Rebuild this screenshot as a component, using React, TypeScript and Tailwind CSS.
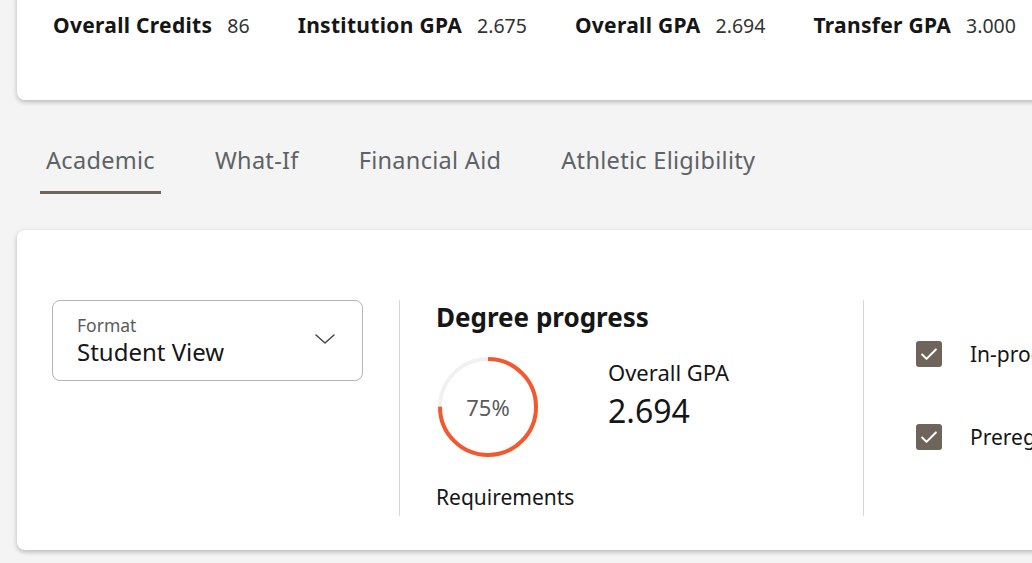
import React from 'react'

const stats = [
  { label: 'Overall Credits', value: '86' },
  { label: 'Institution GPA', value: '2.675' },
  { label: 'Overall GPA', value: '2.694' },
  { label: 'Transfer GPA', value: '3.000' },
]

const tabs = ['Academic', 'What-If', 'Financial Aid', 'Athletic Eligibility']

const ProgressRing: React.FC<{ percent: number }> = ({ percent }) => {
  const r = 48
  const c = 2 * Math.PI * r
  return (
    <div className="relative w-[104px] h-[104px] shrink-0">
      <svg width="104" height="104" viewBox="0 0 104 104">
        <circle cx="52" cy="52" r={r} fill="none" stroke="#f1f1f1" strokeWidth="4" />
        <circle
          cx="52"
          cy="52"
          r={r}
          fill="none"
          stroke="#f4582f"
          strokeWidth="4"
          strokeDasharray={`${(c * percent) / 100} ${c}`}
          transform="rotate(-90 52 52)"
        />
      </svg>
      <div className="absolute inset-0 flex items-center justify-center text-[22px] text-[#5b5b5b]">
        {percent}%
      </div>
    </div>
  )
}

const Check: React.FC = () => (
  <div className="w-[26px] h-[26px] shrink-0 rounded-[3px] bg-[#6f6459] flex items-center justify-center">
    <svg width="22" height="22" viewBox="0 0 24 24" fill="none" stroke="white" strokeWidth="2.2" strokeLinecap="round" strokeLinejoin="round">
      <path d="M4.5 12.5l4.8 4.8L19.5 7" />
    </svg>
  </div>
)

export default function App() {
  return (
    <div
      className="w-[1032px] h-[563px] overflow-hidden bg-[#f4f4f4] text-[#161616]"
      style={{ fontFamily: '"Noto Sans", "Open Sans", sans-serif' }}
    >
      {/* Summary card */}
      <div className="ml-[17px] w-[1100px] h-[110px] -mt-[10px] bg-white rounded-lg shadow-[0_2px_5px_rgba(0,0,0,0.25)] flex items-start gap-[48px] pl-[36px] pt-[20px]">
        {stats.map((s) => (
          <div key={s.label} className="flex items-baseline gap-[15px] leading-[30px] whitespace-nowrap">
            <span className="font-bold text-[21px] tracking-[0.3px]">{s.label}</span>
            <span className="text-[#333] text-[19.5px]">{s.value}</span>
          </div>
        ))}
      </div>

      {/* Tabs */}
      <div className="flex gap-[48px] pl-[40px] mt-[44px]">
        {tabs.map((t, i) => (
          <div
            key={t}
            className={`px-[6px] pb-[15px] text-[23.5px] leading-[32px] tracking-[0.3px] text-[#5e6266] border-b-[3px] whitespace-nowrap ${
              i === 0 ? 'border-[#6f6459]' : 'border-transparent'
            }`}
          >
            {t}
          </div>
        ))}
      </div>

      {/* Detail card */}
      <div className="ml-[17px] mt-[36px] w-[1100px] h-[320px] bg-white rounded-lg shadow-[0_2px_5px_rgba(0,0,0,0.25)] flex pl-[35px] pt-[70px]">
        <div className="w-[311px] h-[81px] shrink-0 border border-[#b5b5b5] rounded-lg flex items-center justify-between pl-[24px] pr-[25px]">
          <div className="flex flex-col">
            <span className="text-[17.5px] text-[#5b5b5b] leading-[22px]">Format</span>
            <span className="text-[24px] leading-[32px]">Student View</span>
          </div>
          <svg width="24" height="24" viewBox="0 0 24 24" fill="none" stroke="#444" strokeWidth="1.5" strokeLinecap="round" strokeLinejoin="round" className="-mt-[4px]">
            <path d="M3 8l9 8 9-8" />
          </svg>
        </div>

        <div className="ml-[36px] w-px h-[216px] shrink-0 bg-[#d6d6d6]" />

        <div className="ml-[36px] w-[427px] shrink-0 flex flex-col">
          <div className="text-[26px] font-bold leading-[34px]">Degree progress</div>
          <div className="flex mt-[21px]">
            <ProgressRing percent={75} />
            <div className="ml-[68px] mt-[3px] flex flex-col">
              <span className="text-[22px] leading-[28px]">Overall GPA</span>
              <span className="text-[32px] leading-[44px] mt-[3px]">2.694</span>
            </div>
          </div>
          <div className="text-[21px] leading-[28px] mt-[24px]">Requirements</div>
        </div>

        <div className="w-px h-[216px] shrink-0 bg-[#d6d6d6]" />

        <div className="ml-[52px] flex flex-col gap-[55px] pt-[40px] shrink-0">
          <div className="flex items-center gap-[28px]">
            <Check />
            <span className="text-[21px] leading-[28px] whitespace-nowrap">In-progress courses</span>
          </div>
          <div className="flex items-center gap-[28px]">
            <Check />
            <span className="text-[21px] leading-[28px] whitespace-nowrap">Preregistered courses</span>
          </div>
        </div>
      </div>
    </div>
  )
}
